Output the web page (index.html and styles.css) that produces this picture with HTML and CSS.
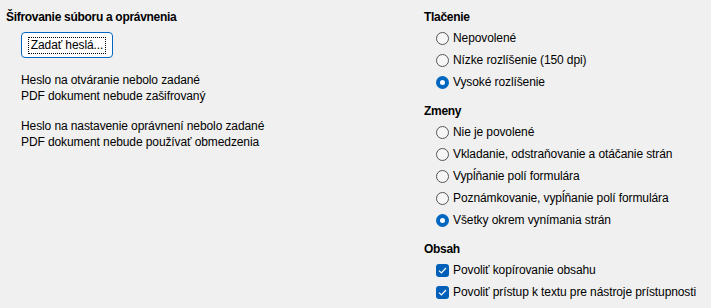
FILE: index.html
```html
<!DOCTYPE html>
<html lang="sk">
<head>
  <meta charset="UTF-8" />
  <title>Zabezpečenie PDF</title>
  <link rel="stylesheet" href="styles.css">
</head>
<body>
  <div class="page">
    <div class="col-left">
      <h3 class="group-title">Šifrovanie súboru a oprávnenia</h3>
      <button class="btn"><span class="btn-label">Zadať heslá...</span></button>

      <p class="note">Heslo na otváranie nebolo zadané<br>PDF dokument nebude zašifrovaný</p>
      <p class="note">Heslo na nastavenie oprávnení nebolo zadané<br>PDF dokument nebude používať obmedzenia</p>
    </div>

    <div class="col-right">
      <div class="group">
        <h3 class="group-title">Tlačenie</h3>
        <label class="row"><span class="radio"></span>Nepovolené</label>
        <label class="row"><span class="radio"></span>Nízke rozlíšenie (150 dpi)</label>
        <label class="row"><span class="radio checked"></span>Vysoké rozlíšenie</label>
      </div>

      <div class="group">
        <h3 class="group-title">Zmeny</h3>
        <label class="row"><span class="radio"></span>Nie je povolené</label>
        <label class="row"><span class="radio"></span>Vkladanie, odstraňovanie a otáčanie strán</label>
        <label class="row"><span class="radio"></span>Vypĺňanie polí formulára</label>
        <label class="row"><span class="radio"></span>Poznámkovanie, vypĺňanie polí formulára</label>
        <label class="row"><span class="radio checked"></span>Všetky okrem vynímania strán</label>
      </div>

      <div class="group">
        <h3 class="group-title">Obsah</h3>
        <label class="row">
          <span class="check"><svg width="9" height="7" viewBox="0 0 9 7"><path d="M1 3.6 L3.4 6 L8 1" fill="none" stroke="#fff" stroke-width="1.2"/></svg></span>
          Povoliť kopírovanie obsahu
        </label>
        <label class="row">
          <span class="check"><svg width="9" height="7" viewBox="0 0 9 7"><path d="M1 3.6 L3.4 6 L8 1" fill="none" stroke="#fff" stroke-width="1.2"/></svg></span>
          Povoliť prístup k textu pre nástroje prístupnosti
        </label>
      </div>
    </div>
  </div>
</body>
</html>
```

FILE: styles.css
```css
body {
  margin: 0;
  padding: 0;
  background-color: #f0f0f0;
  font-family: "Liberation Sans", Arial, sans-serif;
  font-size: 12px;
  letter-spacing: -0.1px;
  color: #000;
}

.page {
  display: grid;
  grid-template-columns: 418px 1fr;
  padding: 9px 6px;
}

.group-title {
  margin: 0;
  font-size: 12px;
  line-height: 16px;
  font-weight: bold;
  letter-spacing: -0.3px;
}

.btn {
  display: flex;
  align-items: center;
  justify-content: center;
  width: 92px;
  height: 26px;
  margin: 7px 0 0 15px;
  padding: 0;
  background-color: #fdfdfd;
  border: 1px solid #0067c0;
  border-radius: 4px;
  font-family: inherit;
  font-size: 12px;
  letter-spacing: inherit;
  color: #000;
}

.btn-label {
  padding: 0 2px;
  line-height: 15px;
  outline: 1px dotted #000;
}

.note {
  margin: 14px 0 0 15px;
  line-height: 16px;
}

.group {
  margin-bottom: 10px;
}

.group .group-title {
  margin-bottom: 2px;
}

.row {
  display: flex;
  align-items: center;
  gap: 4px;
  height: 22px;
  padding-left: 12px;
}

.radio {
  box-sizing: border-box;
  width: 13px;
  height: 13px;
  border: 1px solid #555;
  border-radius: 50%;
  background-color: #f6f6f6;
}

.radio.checked {
  border: 4px solid #0067c0;
  background-color: #fff;
}

.check {
  display: flex;
  align-items: center;
  justify-content: center;
  width: 13px;
  height: 13px;
  border-radius: 3px;
  background-color: #005fb8;
}
```
